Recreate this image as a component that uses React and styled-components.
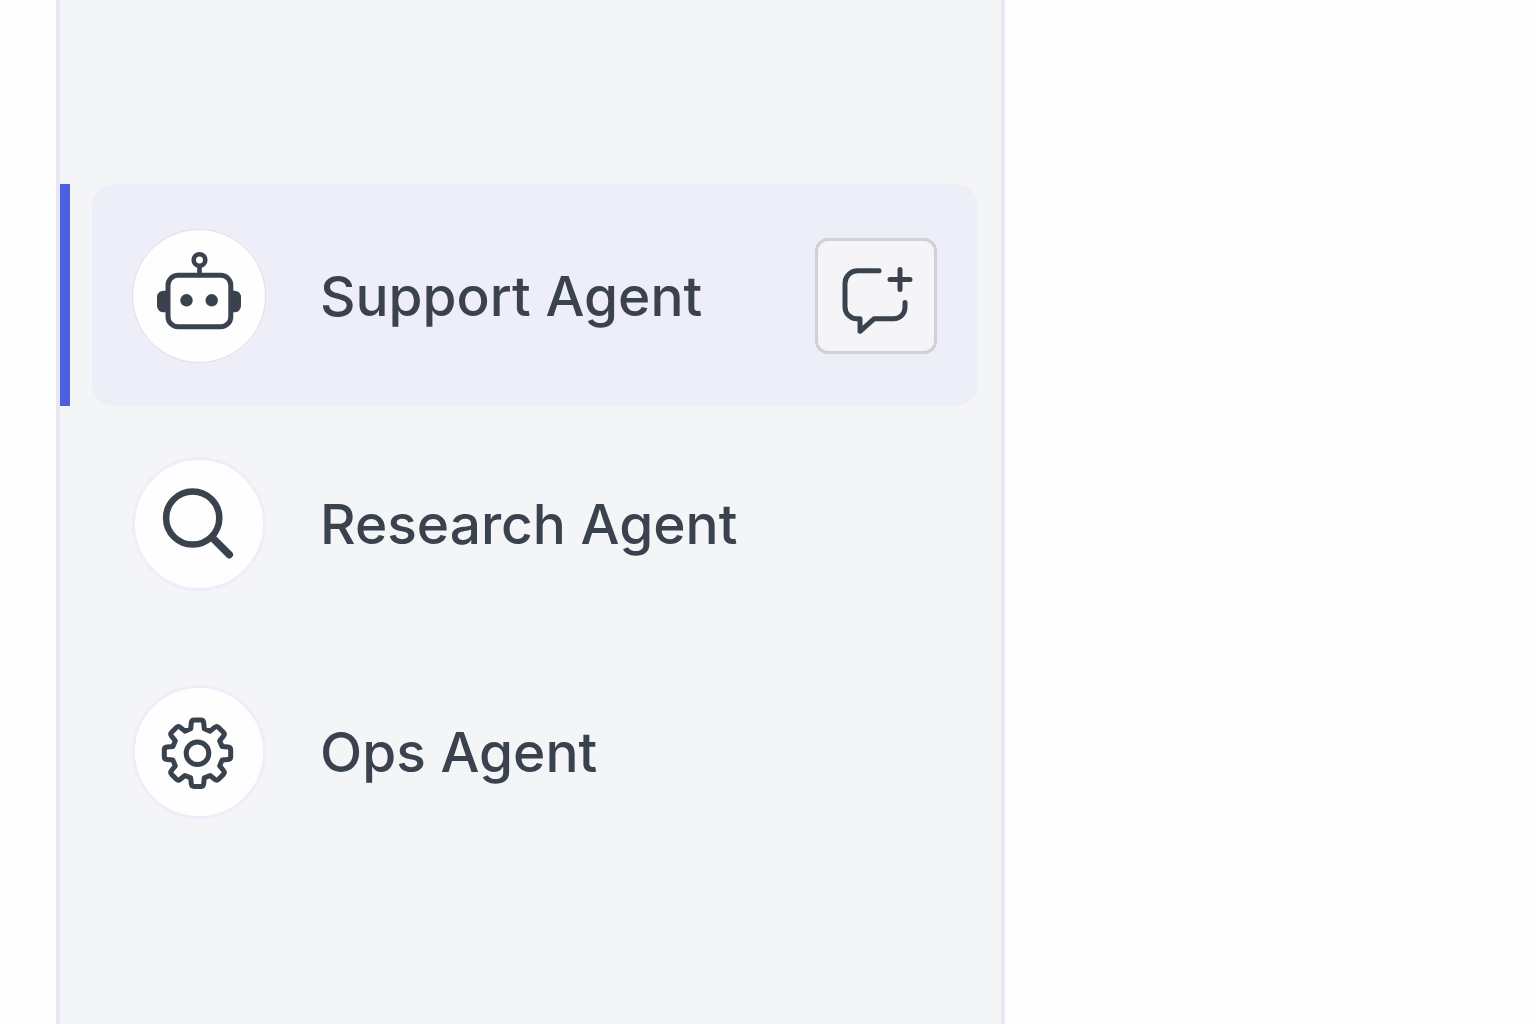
import React, { useState } from 'react'
import styled, { createGlobalStyle } from 'styled-components'

const GlobalStyle = createGlobalStyle`
  * {
    box-sizing: border-box;
  }

  body {
    margin: 0;
    background: #fefefe;
    color: #3a424e;
    font-family: Inter, 'Liberation Sans', sans-serif;
  }
`

const agents = [
  { id: 'support', name: 'Support Agent', Icon: RobotIcon },
  { id: 'research', name: 'Research Agent', Icon: SearchIcon },
  { id: 'ops', name: 'Ops Agent', Icon: GearIcon },
]

export default function App() {
  const [selected, setSelected] = useState('support')

  const handleSelect = (e, id) => {
    e.preventDefault()
    setSelected(id)
  }

  return (
    <Layout>
      <GlobalStyle />
      <Sidebar aria-label="Agents">
        <AgentList>
          {agents.map(({ id, name, Icon }) => (
            <AgentRow key={id}>
              <Marker $active={id === selected} />
              <AgentCard $active={id === selected}>
                <AgentLink href={`#${id}`} onClick={e => handleSelect(e, id)}>
                  <Avatar $active={id === selected}>
                    <Icon />
                  </Avatar>
                  <AgentName>{name}</AgentName>
                </AgentLink>
                {id === selected && (
                  <NewChatButton type="button" aria-label="New chat">
                    <NewChatIcon />
                  </NewChatButton>
                )}
              </AgentCard>
            </AgentRow>
          ))}
        </AgentList>
      </Sidebar>
      <main />
    </Layout>
  )
}

function RobotIcon() {
  return (
    <Icon96 viewBox="0 0 96 96" strokeWidth="5">
      <circle cx="48.5" cy="12" r="5.8" strokeWidth="4.6" />
      <path d="M48.5 19v8" strokeWidth="4.6" />
      <rect x="17" y="27.3" width="62.8" height="51.4" rx="10" />
      <path d="M15 42.7h-2.5a6.5 6.5 0 0 0-6.5 6.5v8.6a6.5 6.5 0 0 0 6.5 6.5H15z" fill="currentColor" stroke="none" />
      <path d="M81.5 42.7h2a6.5 6.5 0 0 1 6.5 6.5v8.6a6.5 6.5 0 0 1-6.5 6.5h-2z" fill="currentColor" stroke="none" />
      <circle cx="35.5" cy="52.3" r="6.2" fill="currentColor" stroke="none" />
      <circle cx="60.7" cy="52.3" r="6.2" fill="currentColor" stroke="none" />
    </Icon96>
  )
}

function SearchIcon() {
  return (
    <Icon96 viewBox="0 0 96 96" strokeWidth="6.5">
      <circle cx="41.7" cy="42" r="26.6" />
      <path d="M61.5 61.8 78.3 78.7" strokeWidth="7.5" />
    </Icon96>
  )
}

// outline of one tooth, centred on the gear and pointing up
const tooth = [[-6.8, -24.6], [-6.2, -30.5], [-5.9, -33.2], [-3.4, -33.2], [3.4, -33.2], [5.9, -33.2], [6.2, -30.5], [6.8, -24.6]]

const gearPath = Array.from({ length: 8 }, (_, i) => {
  const a = (i * Math.PI) / 4
  const p = tooth.map(([x, y]) => {
    const px = 46.5 + x * Math.cos(a) - y * Math.sin(a)
    const py = 49.3 + x * Math.sin(a) + y * Math.cos(a)
    return `${px.toFixed(2)} ${py.toFixed(2)}`
  })
  return `${i ? 'L' : 'M'}${p[0]}L${p[1]}Q${p[2]} ${p[3]}L${p[4]}Q${p[5]} ${p[6]}L${p[7]}`
}).join('') + 'Z'

function GearIcon() {
  return (
    <Icon96 viewBox="0 0 96 96" strokeWidth="5">
      <path d={gearPath} />
      <circle cx="46.5" cy="49.3" r="11.3" />
    </Icon96>
  )
}

function NewChatIcon() {
  return (
    <Icon80 viewBox="0 -1 80 80" strokeWidth="5">
      <path d="M43 13.8H21.5A12.5 12.5 0 0 0 9 26.3V50a11.8 11.8 0 0 0 11.8 11.8H24v12.5L38 61.8h19.5A11.5 11.5 0 0 0 69 50.3V45.5" />
      <path d="M64 12.5v20M54 22.5h20" />
    </Icon80>
  )
}

const Layout = styled.div`
  display: grid;
  grid-template-columns: minmax(0, 949px) 1fr;
  min-height: 100vh;
  padding-left: 56px;
`

const Sidebar = styled.nav`
  padding: 184px 23px 24px 0;
  background: #f4f5f7;
  border: solid #e8e7f4;
  border-width: 0 4px;
`

const AgentList = styled.ul`
  display: flex;
  flex-direction: column;
  gap: 6px;
  margin: 0;
  padding: 0;
  list-style: none;
`

const AgentRow = styled.li`
  display: flex;
  gap: 22px;
`

const Marker = styled.span`
  width: 10px;
  flex-shrink: 0;
  background: ${p => p.$active ? '#4c5fe0' : 'transparent'};
`

const AgentCard = styled.div`
  flex: 1;
  display: flex;
  align-items: center;
  gap: 24px;
  padding: 45px 41px 43px 40px;
  border-radius: 22px;
  background: ${p => p.$active ? '#eeeef9' : 'transparent'};
`

const AgentLink = styled.a`
  flex: 1;
  display: flex;
  align-items: center;
  gap: 54px;
  color: inherit;
  text-decoration: none;
`

const Avatar = styled.span`
  display: flex;
  align-items: center;
  justify-content: center;
  flex-shrink: 0;
  width: 134px;
  height: 134px;
  border: ${p => p.$active ? '1px solid #dedeea' : '3px solid #eeedf8'};
  border-radius: 50%;
  background: #fefefe;
`

const AgentName = styled.span`
  font-size: 55px;
  font-weight: 500;
  line-height: 72px;
  white-space: nowrap;
`

const NewChatButton = styled.button`
  display: flex;
  align-items: center;
  justify-content: center;
  flex-shrink: 0;
  width: 122px;
  height: 116px;
  padding: 0;
  border: 3px solid #d0d1d7;
  border-radius: 13px;
  background: #f5f5f8;
  color: inherit;
  cursor: pointer;
`

const Glyph = styled.svg`
  display: block;
  fill: none;
  stroke: currentColor;
  stroke-linecap: round;
  stroke-linejoin: round;
`

const Icon96 = styled(Glyph)`
  width: 96px;
  height: 96px;
`

const Icon80 = styled(Glyph)`
  width: 80px;
  height: 80px;
`
